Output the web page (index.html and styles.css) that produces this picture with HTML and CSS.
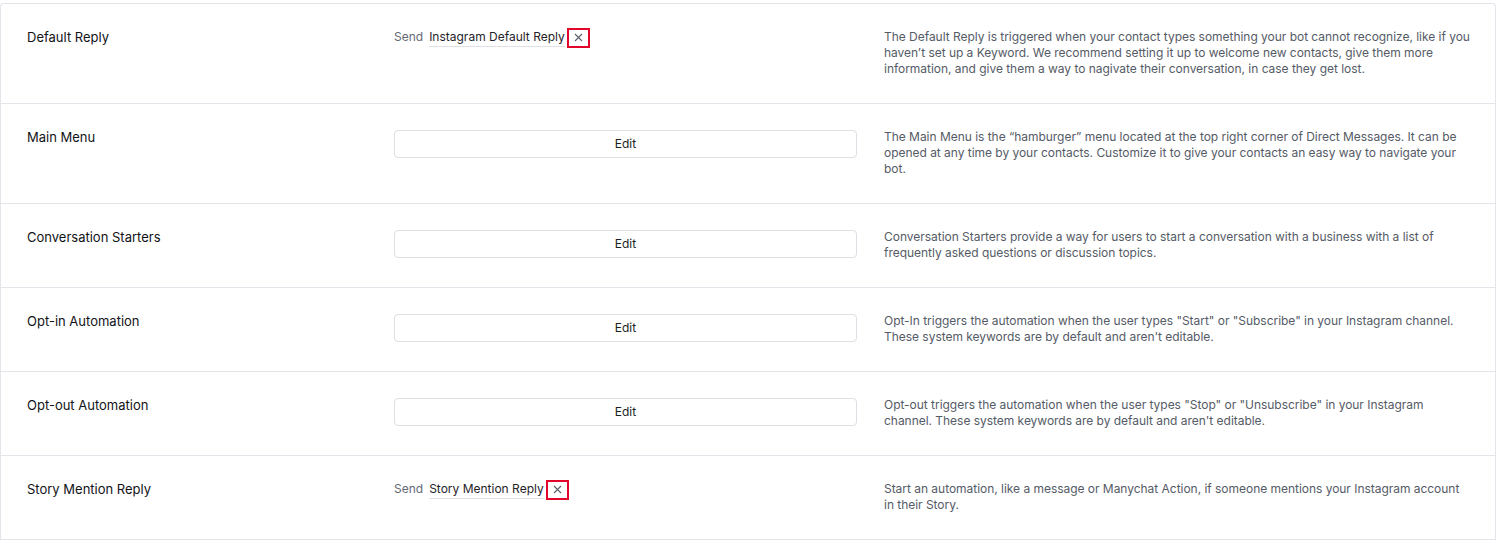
FILE: index.html
```html
<!DOCTYPE html>
<html lang="en">
<head>
<meta charset="utf-8">
<title>Instagram automations</title>
<link rel="stylesheet" href="styles.css">
</head>
<body>
<div class="panel">
  <div class="row">
    <div class="title">Default Reply</div>
    <div class="action">
      <span class="send">Send</span>
      <span class="link">Instagram Default Reply</span>
      <span class="remove"><svg width="9" height="9" viewBox="0 0 9 9"><path d="M1 1L8 8M8 1L1 8" stroke="#5b616b" stroke-width="1.1" fill="none"/></svg></span>
    </div>
    <div class="desc">The Default Reply is triggered when your contact types something your bot cannot recognize, like if you haven’t set up a Keyword. We recommend setting it up to welcome new contacts, give them more information, and give them a way to nagivate their conversation, in case they get lost.</div>
  </div>
  <div class="row">
    <div class="title">Main Menu</div>
    <div class="action-btn"><button class="edit">Edit</button></div>
    <div class="desc">The Main Menu is the “hamburger” menu located at the top right corner of Direct Messages. It can be opened at any time by your contacts. Customize it to give your contacts an easy way to navigate your bot.</div>
  </div>
  <div class="row">
    <div class="title">Conversation Starters</div>
    <div class="action-btn"><button class="edit">Edit</button></div>
    <div class="desc">Conversation Starters provide a way for users to start a conversation with a business with a list of frequently asked questions or discussion topics.</div>
  </div>
  <div class="row">
    <div class="title">Opt-in Automation</div>
    <div class="action-btn"><button class="edit">Edit</button></div>
    <div class="desc">Opt-In triggers the automation when the user types "Start" or "Subscribe" in your Instagram channel. These system keywords are by default and aren't editable.</div>
  </div>
  <div class="row">
    <div class="title">Opt-out Automation</div>
    <div class="action-btn"><button class="edit">Edit</button></div>
    <div class="desc">Opt-out triggers the automation when the user types "Stop" or "Unsubscribe" in your Instagram channel. These system keywords are by default and aren't editable.</div>
  </div>
  <div class="row">
    <div class="title">Story Mention Reply</div>
    <div class="action">
      <span class="send">Send</span>
      <span class="link">Story Mention Reply</span>
      <span class="remove"><svg width="9" height="9" viewBox="0 0 9 9"><path d="M1 1L8 8M8 1L1 8" stroke="#5b616b" stroke-width="1.1" fill="none"/></svg></span>
    </div>
    <div class="desc">Start an automation, like a message or Manychat Action, if someone mentions your Instagram account in their Story.</div>
  </div>
</div>
</body>
</html>
```

FILE: styles.css
```css
* { box-sizing: border-box; }
html, body { margin: 0; padding: 0; background: #ffffff; }
body {
  font-family: Inter, "Noto Sans", sans-serif;
  color: #1b1e23;
}
.panel {
  width: 1496px;
  margin-top: 3px;
  border: 1px solid #e3e5ea;
  border-bottom: none;
  border-radius: 4px 4px 0 0;
}
.row {
  display: grid;
  grid-template-columns: 340px 463px 1fr;
  column-gap: 27px;
  padding: 25px 25px 26px 26px;
  border-bottom: 1px solid #e3e5ea;
  align-items: start;
}
.title {
  font-size: 13px;
  line-height: 16px;
  font-weight: 400;
  color: #111317;
}
.action {
  display: flex;
  align-items: center;
  height: 16px;
  font-size: 12px;
  line-height: 16px;
}
.action-btn {
  padding-top: 1px;
}
.send {
  color: #646a75;
  margin-right: 6px;
}
.link {
  color: #1f2329;
  border-bottom: 1px solid #dfe1e6;
  line-height: 16px;
  padding-bottom: 1px;
  margin-top: 2px;
}
.remove {
  display: inline-flex;
  align-items: center;
  justify-content: center;
  width: 23px;
  height: 20px;
  border: 2px solid #e2062c;
  margin-left: 2px;
  margin-top: 1px;
}
.edit {
  display: block;
  width: 463px;
  height: 28px;
  background: #ffffff;
  border: 1px solid #dcdfe4;
  border-radius: 4px;
  font-family: Inter, "Noto Sans", sans-serif;
  font-size: 12px;
  line-height: 26px;
  color: #1b1e23;
  padding: 0 0 1px 0;
}
.desc {
  font-size: 12px;
  line-height: 16px;
  letter-spacing: -0.03px;
  color: #555b66;
}
```
